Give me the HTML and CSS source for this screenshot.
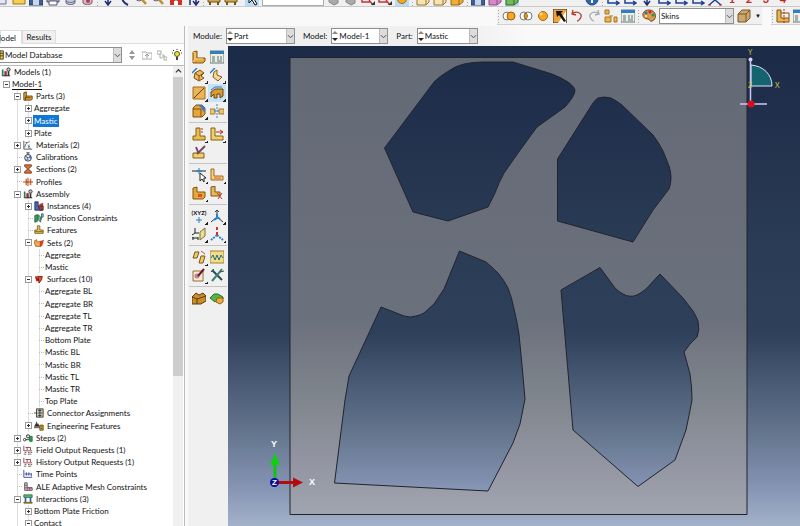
FILE: index.html
```
<!DOCTYPE html>
<html lang="en">
<head>
<meta charset="utf-8">
<meta name="viewport" content="width=device-width, initial-scale=1.0"/>
<title>Model Database</title>
<link rel="stylesheet" href="styles.css">
</head>
<body>
<svg class="defs" aria-hidden="true">
    <!-- tree icons -->
    <symbol id="t-models" viewBox="0 0 12 12"><path d="M1 3h2v7H1z" fill="#2b7a48"/><path d="M4 5h3v6H4z" fill="#a02c3c"/><path d="M1 10h10v1H1zM8 5h2v5H8z" fill="#333"/><circle cx="9" cy="3" r="2" fill="#ccc" stroke="#222"/></symbol>
    <symbol id="t-part" viewBox="0 0 12 12"><path d="M1 2l3-1v5h7v4l-2 1H1z" fill="#e2a02c" stroke="#57380a"/><path d="M4 6l-1 2v3M3 8h6" fill="none" stroke="#57380a"/></symbol>
    <symbol id="t-mat" viewBox="0 0 12 12"><path d="M1 1v10h10M2 9c1-5 3-6 6-7" fill="none" stroke="#444"/><path d="M8 6c-3 0-2 2 0 2-3 0-2 2 1 2M3 3h2" fill="none" stroke="#2d5b8f"/></symbol>
    <symbol id="t-cal" viewBox="0 0 12 12"><circle cx="6" cy="7" r="4" fill="#e8ecff" stroke="#223"/><path d="M4 1h4M6 1v2M6 7l-3-2" stroke="#223" fill="none"/><path d="M6 7l3-3 1 4z" fill="#4b62d6"/><path d="M3 9l3-2 1 3z" fill="#49a562"/></symbol>
    <symbol id="t-sec" viewBox="0 0 12 12"><path d="M2 1h8v2l-3 2v2l3 2v2H2V9l3-2V5L2 3z" fill="#d4763c" stroke="#713015"/></symbol>
    <symbol id="t-prof" viewBox="0 0 12 12"><path d="M3 2h2v8H3zM8 2h2v8H8z" fill="#d4763c"/><path d="M0 6h12M6 1v10" stroke="#8e2f12"/></symbol>
    <symbol id="t-inst" viewBox="0 0 12 12"><path d="M1 1h4v5h5v5H1z" fill="#4a69b5" stroke="#1b2c5c"/><path d="M6 4l5-2v4H8z" fill="#c73333"/><path d="M5 6h6v5H7z" fill="#89453f" stroke="#5a1f1f"/></symbol>
    <symbol id="t-pos" viewBox="0 0 12 12"><path d="M1 3l3-1v8l-3 1z" fill="#3aa060" stroke="#1f5e36"/><path d="M5 2l3 3v6L5 8z" fill="#78c08d" stroke="#1f5e36"/><path d="M9 1h2v4H9zM9 5v3" fill="#9fd0ce" stroke="#356"/></symbol>
    <symbol id="t-feat" viewBox="0 0 12 12"><path d="M4 1h3v5h4v4H1V6h3z" fill="#e9c760" stroke="#77561a"/><path d="M1 8h10" stroke="#77561a"/></symbol>
    <symbol id="t-sets" viewBox="0 0 12 12"><path d="M0 4l3-2 1 3 4-1v6H2z" fill="#f0b04d" stroke="#9a5a10"/><path d="M7 4l5-2-2 7-3 2z" fill="#df3a26"/></symbol>
    <symbol id="t-surf" viewBox="0 0 12 12"><path d="M1 3l4-1 1 6-3 1z" fill="#b01d1d"/><path d="M5 3l5 0-1 4-3 4z" fill="#d9541e" stroke="#7a1010"/><path d="M2 3l3 1" stroke="#e9a23c"/></symbol>
    <symbol id="t-conn" viewBox="0 0 12 12"><path d="M3 1h8v10H3z" fill="#c9c4b4" stroke="#333"/><path d="M0 6h4M5 3h4M5 6h5M5 9h4M7 1v10" stroke="#333" fill="none"/></symbol>
    <symbol id="t-eng" viewBox="0 0 12 12"><path d="M0 7l2-4h3l2 4z" fill="#333"/><path d="M3 1v3M0 8h7" stroke="#333"/><path d="M7 5h4v6H7z" fill="#e5c43b" stroke="#4a3a06"/><path d="M8 7h2M8 9h2" stroke="#4a3a06"/></symbol>
    <symbol id="t-step" viewBox="0 0 12 12"><circle cx="2" cy="8" r="1.5" fill="#fff" stroke="#222"/><circle cx="6" cy="4" r="2" fill="#cfe3cf" stroke="#222"/><path d="M3 8h5M7 6l2 2" stroke="#222"/><path d="M8 4h3v6H8z" fill="#3c9553" stroke="#173"/></symbol>
    <symbol id="t-out" viewBox="0 0 12 12"><path d="M1 1v6h10M3 3h6v3M5 3v3" fill="none" stroke="#8e2d3a"/><path d="M2 9h2M6 9h2M9 9h2M1 11h3M6 11h4" stroke="#554"/></symbol>
    <symbol id="t-time" viewBox="0 0 12 12"><path d="M1 1v9h10" stroke="#2b3b8e" fill="none"/><path d="M2 6h8M4 4v4M7 4v4M10 5v4" stroke="#2b3b8e"/></symbol>
    <symbol id="t-ale" viewBox="0 0 12 12"><path d="M2 1v9h9V7H5V1z" fill="#ddd" stroke="#444"/><path d="M2 4h3M2 7h9M5 7v3M8 7v3" stroke="#94364a"/></symbol>
    <symbol id="t-int" viewBox="0 0 12 12"><path d="M1 1h10v3H1z" fill="#5fbf67" stroke="#1f6a3a"/><path d="M3 4v6M9 4v6" stroke="#2d5fb5" stroke-width="2"/><path d="M1 10h10v1H1z" fill="#d9c34c" stroke="#665a10"/></symbol>
    <!-- toolbox and toolbar icons -->
    <symbol id="i-part" viewBox="0 0 14 14"><path d="M1 2l4-1v7h8v3l-2 2H1z" fill="#e5a63a" stroke="#865408"/><path d="M1 2l2 1v6l-2 3M3 9h8" fill="none" stroke="#f8d98d"/></symbol>
    <symbol id="i-table" viewBox="0 0 14 14"><path d="M0 1h14v12H0z" fill="#f3efdc" stroke="#66786e"/><path d="M0 1h14v3H0z" fill="#2e7fc4"/><path d="M2 7h3M7 7h2M10 7h2M2 9h3M7 9h2M10 9h2M2 11h3M7 11h5" stroke="#417496"/></symbol>
    <symbol id="i-ext" viewBox="0 0 14 14"><path d="M3 5l5-3 4 3-3 3 3 2-5 3-5-3z" fill="#efb95a" stroke="#7c4e10"/><path d="M3 5l4 3 5-3M7 8v4" fill="none" stroke="#7c4e10"/><path d="M0 5l5-5" stroke="#247bc1" stroke-width="1.5"/></symbol>
    <symbol id="i-shell" viewBox="0 0 14 14"><path d="M4 4l3-2v5l5 2-4 4-5-4z" fill="#f7d699" stroke="#8c5c16"/><path d="M0 5l5-5" stroke="#247bc1" stroke-width="1.5"/></symbol>
    <symbol id="i-wire" viewBox="0 0 14 14"><path d="M1 1h12v12H1z" fill="#ebb458" stroke="#a26d19"/><path d="M2 12L12 2" stroke="#59400e"/></symbol>
    <symbol id="i-cut" viewBox="0 0 14 14"><path d="M1 6l4-3h8v7l-3 2V8H7v4H4V8l-3 3z" fill="#dd9c31" stroke="#70450b"/><path d="M1 4l4-3h7" fill="none" stroke="#247bc1"/></symbol>
    <symbol id="i-round" viewBox="0 0 14 14"><path d="M1 4l3-3h6l3 3v6l-3 3H1z" fill="#e5a63a" stroke="#805110"/><path d="M1 5h8v8" fill="none" stroke="#805110"/><path d="M6 1h4l3 3v4C11 8 10 4 6 1z" fill="#4879c9"/></symbol>
    <symbol id="i-mirror" viewBox="0 0 14 14"><path d="M0 5h5v5H0zM9 5h5v5H9z" fill="#efc271" stroke="#a47a37"/><path d="M7 0v14M4 7h6" stroke="#2b86cd" stroke-dasharray="2 1"/></symbol>
    <symbol id="i-edit" viewBox="0 0 14 14"><path d="M4 1h4v8h5v4H1V9h3z" fill="#e9bc50" stroke="#86600f"/><path d="M10 1v6" stroke="#c3261b" stroke-dasharray="2 1"/></symbol>
    <symbol id="i-regen" viewBox="0 0 14 14"><path d="M1 1h4v8h8v4H1z" fill="#efcf70" stroke="#86600f"/><path d="M6 5h6M10 3l3 2-3 2" stroke="#c3261b" fill="none"/></symbol>
    <symbol id="i-del" viewBox="0 0 14 14"><path d="M1 8h11v5H1z" fill="#efcf70" stroke="#86600f"/><path d="M4 2l2 5M5 9l8-8" stroke="#774768" stroke-width="2"/></symbol>
    <symbol id="i-pick" viewBox="0 0 14 14"><path d="M0 3h14" stroke="#222"/><path d="M4 3h6M7 0v6" stroke="#217ac8"/><path d="M8 5v8l2-2 2 3v-4h2z" fill="#fff" stroke="#222"/></symbol>
    <symbol id="i-axes" viewBox="0 0 14 14"><path d="M7 8V1M7 8l-6 5M7 8l6 5M5 3l2-2 2 2" stroke="#263b4c" fill="none"/><path d="M7 5v4l-3 2M7 8l3 2" stroke="#2382cf" stroke-width="2" fill="none"/></symbol>
    <symbol id="i-plane" viewBox="0 0 14 14"><path d="M8 5l5-4v8l-5 4z" fill="#f0dc94" stroke="#777233"/><path d="M3 1v5h4M3 6L0 8M0 11h6M1 10v3M6 10v3" fill="none" stroke="#222"/></symbol>
    <symbol id="i-csys" viewBox="0 0 14 14"><path d="M7 8l-6 5M7 8l6 5" stroke="#2a82c9" stroke-width="2" stroke-dasharray="2 1"/><path d="M7 0v8" stroke="#cd3328" stroke-width="2" stroke-dasharray="3 2"/></symbol>
    <symbol id="i-xform" viewBox="0 0 14 14"><path d="M3 2h4L5 8H1zM9 6h4l-2 7H7z" fill="#efca6b" stroke="#785a15"/><path d="M9 1l4 3" stroke="#c42"/></symbol>
    <symbol id="i-wave" viewBox="0 0 14 14"><path d="M0 1h14v12H0z" fill="#f2dc84" stroke="#9b8538"/><path d="M1 8l2-3 2 5 2-5 2 5 2-5 2 3" fill="none" stroke="#1d6e91"/></symbol>
    <symbol id="i-note" viewBox="0 0 14 14"><path d="M1 3h10v10H1z" fill="#f7eccb" stroke="#8c733b"/><circle cx="5" cy="8" r="2.5" fill="#c47ba0"/><path d="M6 8l6-7" stroke="#713" stroke-width="2"/></symbol>
    <symbol id="i-tools" viewBox="0 0 14 14"><path d="M2 2l10 10" stroke="#254f48" stroke-width="2"/><path d="M12 1L8 6l-6 7" stroke="#3c8079" stroke-width="2" fill="none"/><path d="M1 4l3-3M10 4l4-1" stroke="#2c514b"/></symbol>
    <symbol id="i-box" viewBox="0 0 14 14"><path d="M0 6l4-4 3 2 4-2 3 3v5l-5 3H0z" fill="#c98c2b" stroke="#5e3c0a"/><path d="M0 6l5 2 9-3M5 8v5" stroke="#5e3c0a" fill="none"/></symbol>
    <symbol id="i-clump" viewBox="0 0 14 14"><path d="M0 7l4-4 4 0 5 3v2H8l-3 3z" fill="#55b34b" stroke="#27722a"/><path d="M7 7h6v4l-3 2-4-2z" fill="#efae38" stroke="#936113"/></symbol>
    <symbol id="i-trim" viewBox="0 0 14 14"><path d="M1 1l4-1v6h5v4H1z" fill="#edb853" stroke="#7a5414"/><path d="M7 7l5 6M12 7l-4 6" stroke="#b4382c"/></symbol>
    <symbol id="i-partred" viewBox="0 0 14 14"><path d="M1 2l4-1v5h8v5l-2 2H1z" fill="#e5a63a" stroke="#865408"/><path d="M6 8h4v3H6z" fill="#d0552b"/></symbol>
    <symbol id="i-fillet" viewBox="0 0 14 14"><path d="M1 1h3v7h9v4H1z" fill="#f4d089" stroke="#a06a1c"/><path d="M4 10h7" stroke="#d2642b"/></symbol>
    <symbol id="i-two" viewBox="0 0 14 14"><circle cx="5" cy="7" r="4" fill="#fff" stroke="#777"/><circle cx="9" cy="7" r="4" fill="#f4a726" stroke="#9a6209"/></symbol>
    <symbol id="i-lens" viewBox="0 0 14 14"><circle cx="5" cy="7" r="4" fill="#fff" stroke="#777"/><circle cx="9" cy="7" r="4" fill="#fff" stroke="#777"/><path d="M7 4a4 4 0 0 1 0 6 4 4 0 0 1 0-6z" fill="#f4a726" stroke="#9a6209"/></symbol>
    <symbol id="i-ball" viewBox="0 0 14 14"><circle cx="7" cy="7" r="4.5" fill="#f4a726" stroke="#a66c10"/><circle cx="5" cy="5" r="1.5" fill="#ffd78b"/></symbol>
    <symbol id="i-invert" viewBox="0 0 14 14"><path d="M0 0h14v14H0z" fill="#eca338" stroke="#333"/><path d="M5 14h8V2z" fill="#fff"/><path d="M3 2h7L8 4l5 8-2 1-5-7-2 2z" fill="#15110b"/></symbol>
    <symbol id="i-undo" viewBox="0 0 14 14"><path d="M3 1L2 5l4 1M2 5c4-4 10-1 9 3-1 2-2 4-4 4" fill="none" stroke="#b93a31" stroke-width="1.3"/></symbol>
    <symbol id="i-redo" viewBox="0 0 14 14"><path d="M11 1l1 4-4 1M12 5C8 1 2 4 3 8c1 2 2 4 4 4" fill="none" stroke="#aaa" stroke-width="1.3"/></symbol>
    <symbol id="i-parts" viewBox="0 0 14 14"><path d="M1 1h4v4H1zM1 8h6v5H1zM10 8h3v5h-3z" fill="#f0b24c" stroke="#a8741d"/><path d="M5 7h4" stroke="#a8741d"/></symbol>
    <symbol id="i-palette" viewBox="0 0 14 14"><path d="M7 1c8 0 8 10 3 11-3 1-2-2-4-2C-1 10-1 1 7 1z" fill="#d69a52" stroke="#75461c"/><circle cx="4" cy="4" r="1.5" fill="#2a6ac0"/><circle cx="8" cy="3" r="1.5" fill="#c22"/><circle cx="11" cy="6" r="1.5" fill="#2b9447"/><circle cx="4" cy="7" r="1.2" fill="#ee4"/></symbol>
    <symbol id="i-cube" viewBox="0 0 14 14"><path d="M1 5l4-4h8v8l-4 4H1z" fill="#cda86c" stroke="#76562b"/><path d="M1 5h8v8M9 5l4-4" fill="none" stroke="#76562b"/></symbol>
    <symbol id="i-datum" viewBox="0 0 14 14"><path d="M1 1h4v8h8v4H1z" fill="#efb44e" stroke="#7b5519"/><path d="M5 4h8v5" stroke="#7b5519" fill="none"/><path d="M8 0v14" stroke="#c4281e" stroke-dasharray="2 1"/></symbol>
    <symbol id="i-doc" viewBox="0 0 14 14"><path d="M2 1h9v11H2z" fill="#e4e6f5" stroke="#66688e"/></symbol>
    <symbol id="i-folder" viewBox="0 0 14 14"><path d="M1 4h12v8H1z" fill="#f7cf57" stroke="#9f7414"/></symbol>
    <symbol id="i-save" viewBox="0 0 14 14"><path d="M0 1h14v12H0z" fill="#3e5f95" stroke="#253c66"/><path d="M4 8h6v5H4z" fill="#c9d6e8"/></symbol>
    <symbol id="i-print" viewBox="0 0 14 14"><path d="M1 5h12v5H1z" fill="#aaa6c4" stroke="#55557f"/><path d="M3 9h8v4H3z" fill="#fff" stroke="#55557f"/></symbol>
    <symbol id="i-db" viewBox="0 0 14 14"><path d="M3 2h9v9c-2 2-7 2-9 0z" fill="#c4cada" stroke="#5d6889"/><path d="M3 9c3 2 6 2 9 0" stroke="#5d6889" fill="none"/></symbol>
    <symbol id="i-db2" viewBox="0 0 14 14"><path d="M3 2h9v9c-2 2-7 2-9 0z" fill="#d5bcc8" stroke="#84506b"/><circle cx="8" cy="9" r="2" fill="#ae3d60"/></symbol>
    <symbol id="i-down" viewBox="0 0 14 14"><path d="M7 1v11M4 9l3 4 3-4" fill="none" stroke="#1c2b78" stroke-width="1.5"/></symbol>
    <symbol id="i-curve" viewBox="0 0 14 14"><path d="M4 3c0 6 2 8 6 10" fill="none" stroke="#252c7e" stroke-width="2"/></symbol>
    <symbol id="i-mag" viewBox="0 0 14 14"><path d="M3 3l8 9" stroke="#bb9131" stroke-width="2.5"/><circle cx="4" cy="6" r="3" fill="#dde" stroke="#666"/></symbol>
    <symbol id="i-fit" viewBox="0 0 14 14"><path d="M1 2h12v11H1z" fill="#cf3326"/><path d="M5 9h4v4H5z" fill="#fff"/><path d="M7 2v8" stroke="#fff"/></symbol>
    <symbol id="i-updown" viewBox="0 0 14 14"><path d="M4 2v11M10 2v10M7 9l3 4 3-4" fill="none" stroke="#1c2b78" stroke-width="1.5"/></symbol>
    <symbol id="i-bench" viewBox="0 0 14 14"><path d="M1 7h12v3H1z" fill="#c9a85b" stroke="#735415"/><path d="M3 10v3M11 10v3" stroke="#735415" stroke-width="2"/></symbol>
    <symbol id="i-arrow" viewBox="0 0 14 14"><path d="M4 1v10l3-3 3 5 2-1-3-5h3z" fill="#fff" stroke="#111"/></symbol>
    <symbol id="i-gray" viewBox="0 0 14 14"><path d="M2 3h9v8l-4 2-5-3z" fill="#aaa" stroke="#888"/></symbol>
    <symbol id="i-redpick" viewBox="0 0 14 14"><path d="M1 2v8h9M8 8l4 5" stroke="#c03632" stroke-width="1.5" fill="none"/><path d="M10 13h4v-4z" fill="#333"/></symbol>
    <symbol id="i-frame" viewBox="0 0 14 14"><path d="M1 5h9v8H1zM10 5l3-3v8l-3 3" fill="#f6e5b4" stroke="#9b7426"/></symbol>
    <symbol id="i-solid" viewBox="0 0 14 14"><path d="M1 5h8v8H1zM9 5l4-3v8l-4 3" fill="#f0af34" stroke="#9b6410"/></symbol>
    <symbol id="i-green" viewBox="0 0 14 14"><path d="M1 5h8v8H1zM9 5l4-3v8l-4 3" fill="#76b95a" stroke="#2d6a2a"/></symbol>
    <symbol id="i-pink" viewBox="0 0 14 14"><path d="M1 5h8v8H1zM9 5l4-3v8l-4 3" fill="#d986c5" stroke="#864e91"/></symbol>
    <symbol id="i-info" viewBox="0 0 14 14"><circle cx="7" cy="7" r="6" fill="#2d67b3" stroke="#1b427b"/><path d="M7 6v5" stroke="#fff" stroke-width="2"/></symbol>
    <symbol id="i-view" viewBox="0 0 14 14"><path d="M2 3v8h11M10 9l3 2-3 2" fill="none" stroke="#1b409c" stroke-width="1.5"/></symbol>
    <symbol id="i-iso" viewBox="0 0 14 14"><path d="M7 2v6l-6 5M7 8l6 5" fill="none" stroke="#1b409c" stroke-width="1.5"/><path d="M0 13h3M11 13h3" stroke="#c22"/></symbol>
    <!-- small widgets -->
    <symbol id="w-chev" viewBox="0 0 8 8"><path d="M1 3l3 3 3-3" fill="none" stroke="#444"/></symbol>
    <symbol id="w-spin" viewBox="0 0 6 14"><path d="M0 5l3-3 3 3z" fill="#888"/><path d="M0 9l3 3 3-3z" fill="#222"/></symbol>
</svg>

<header class="toolbars">
    <div class="bar bar-top">
        <button class="ib"><svg><use href="#i-doc"/></svg></button>
        <button class="ib"><svg><use href="#i-folder"/></svg></button>
        <button class="ib"><svg><use href="#i-save"/></svg></button>
        <button class="ib"><svg><use href="#i-print"/></svg></button>
        <button class="ib"><svg><use href="#i-db"/></svg></button>
        <button class="ib"><svg><use href="#i-db2"/></svg></button>
        <button class="ib grip-before"><svg><use href="#i-down"/></svg></button>
        <button class="ib"><svg><use href="#i-curve"/></svg></button>
        <button class="ib"><svg><use href="#i-mag"/></svg></button>
        <button class="ib"><svg><use href="#i-mag"/></svg></button>
        <button class="ib"><svg><use href="#i-fit"/></svg></button>
        <button class="ib"><svg><use href="#i-updown"/></svg></button>
        <button class="ib grip-before"><svg><use href="#i-bench"/></svg></button>
        <button class="ib"><svg><use href="#i-bench"/></svg></button>
        <button class="ib grip-before on"><svg><use href="#i-arrow"/></svg></button>
        <select class="filter" aria-label="Selection filter"><option></option></select>
        <button class="ib"><svg><use href="#i-gray"/></svg></button>
        <button class="ib"><svg><use href="#i-gray"/></svg></button>
        <button class="ib"><svg><use href="#i-redpick"/></svg></button>
        <button class="ib"><svg><use href="#i-redpick"/></svg></button>
        <button class="ib on"><svg><use href="#i-ball"/></svg></button>
        <button class="ib grip-before"><svg><use href="#i-frame"/></svg></button>
        <button class="ib"><svg><use href="#i-frame"/></svg></button>
        <button class="ib"><svg><use href="#i-solid"/></svg></button>
        <button class="ib grip-before"><svg><use href="#i-save"/></svg></button>
        <button class="ib"><svg><use href="#i-pink"/></svg></button>
        <button class="ib on"><svg><use href="#i-green"/></svg></button>
        <span class="views">
            <button class="ib"><svg><use href="#i-info"/></svg></button>
            <button class="ib grip-before"><svg><use href="#i-view"/></svg></button>
            <button class="ib"><svg><use href="#i-view"/></svg></button>
            <button class="ib"><svg><use href="#i-down"/></svg></button>
            <button class="ib"><svg><use href="#i-view"/></svg></button>
            <button class="ib"><svg><use href="#i-view"/></svg></button>
            <button class="ib"><svg><use href="#i-view"/></svg></button>
            <button class="ib"><svg><use href="#i-iso"/></svg></button>
            <button class="ib num">1</button>
            <button class="ib num">2</button>
            <button class="ib num">3</button>
            <button class="ib num">4</button>
        </span>
    </div>
    <div class="bar-row">
        <div class="bar bar-display">
            <button class="ib grip-before"><svg><use href="#i-two"/></svg></button>
            <button class="ib"><svg><use href="#i-lens"/></svg></button>
            <button class="ib"><svg><use href="#i-ball"/></svg></button>
            <button class="ib"><svg><use href="#i-invert"/></svg></button>
            <button class="ib"><svg><use href="#i-undo"/></svg></button>
            <button class="ib"><svg><use href="#i-redo"/></svg></button>
            <button class="ib"><svg><use href="#i-parts"/></svg></button>
            <button class="ib"><svg><use href="#i-table"/></svg></button>
            <button class="ib grip-before"><svg><use href="#i-palette"/></svg></button>
            <span class="combo combo-skins">
                <select aria-label="Color code"><option>Skins</option></select>
                <span class="chev"><svg><use href="#w-chev"/></svg></span>
            </span>
            <button class="ib"><svg><use href="#i-cube"/></svg></button>
            <button class="ib drop" aria-label="Translucency">▼</button>
        </div>
        <div class="bar bar-tools">
            <button class="ib grip-before"><svg><use href="#i-datum"/></svg></button>
            <button class="ib"><svg><use href="#i-table"/></svg></button>
        </div>
    </div>
</header>

<div class="main">
    <aside class="side">
        <nav class="tabs">
            <button class="tab active">Model</button>
            <button class="tab">Results</button>
        </nav>
        <div class="db-row">
            <span class="combo combo-db">
                <svg class="db-icon" viewBox="0 0 6 12"><path d="M0 1h4v10H0z" fill="#e7c642" stroke="#333"/><path d="M0 4h4M0 7h4" stroke="#333"/></svg>
                <select aria-label="Database"><option>Model Database</option></select>
                <span class="chev"><svg><use href="#w-chev"/></svg></span>
            </span>
            <button class="mini" aria-label="Step"><svg viewBox="0 0 10 12"><path d="M2 5l3-4 3 4zM2 7l3 4 3-4z" fill="#999"/></svg></button>
            <button class="mini" aria-label="Up"><svg viewBox="0 0 10 12"><path d="M0 3h4l1 1h5v6H0z" fill="#fff" stroke="#aaa"/><path d="M5 9V6M3 7l2-2 2 2" stroke="#999" fill="none"/></svg></button>
            <button class="mini" aria-label="Filter"><svg viewBox="0 0 10 12"><path d="M0 2h4v3H0zM3 5v4h2M5 6h2v2H5M7 8h3v3H7z" fill="none" stroke="#aaa"/></svg></button>
            <button class="mini" aria-label="Tips"><svg viewBox="0 0 10 12"><path d="M5 0v1M0 4h1M9 4h1M1 1l1 1M9 1L8 2" stroke="#333"/><circle cx="5" cy="5" r="2.5" fill="#f4e13c" stroke="#555520"/><path d="M4 8h2v3H4z" fill="#444"/></svg></button>
        </div>
        <div class="tree-box">
            <ul class="tree">
                <li class="l0"><svg><use href="#t-models"/></svg><span>Models (1)</span></li>
                <li class="l1"><button class="tg minus" aria-label="Collapse"></button><span class="root">Model-1</span></li>
                <li class="l2"><button class="tg minus" aria-label="Collapse"></button><svg><use href="#t-part"/></svg><span>Parts (3)</span></li>
                <li class="l3"><button class="tg" aria-label="Expand"></button><span>Aggregate</span></li>
                <li class="l3"><button class="tg" aria-label="Expand"></button><span class="sel">Mastic</span></li>
                <li class="l3"><button class="tg" aria-label="Expand"></button><span>Plate</span></li>
                <li class="l2"><button class="tg" aria-label="Expand"></button><svg><use href="#t-mat"/></svg><span>Materials (2)</span></li>
                <li class="l2"><i></i><svg><use href="#t-cal"/></svg><span>Calibrations</span></li>
                <li class="l2"><button class="tg" aria-label="Expand"></button><svg><use href="#t-sec"/></svg><span>Sections (2)</span></li>
                <li class="l2"><i></i><svg><use href="#t-prof"/></svg><span>Profiles</span></li>
                <li class="l2"><button class="tg minus" aria-label="Collapse"></button><svg><use href="#t-models"/></svg><span>Assembly</span></li>
                <li class="l3"><button class="tg" aria-label="Expand"></button><svg><use href="#t-inst"/></svg><span>Instances (4)</span></li>
                <li class="l3"><i></i><svg><use href="#t-pos"/></svg><span>Position Constraints</span></li>
                <li class="l3"><i></i><svg><use href="#t-feat"/></svg><span>Features</span></li>
                <li class="l3"><button class="tg minus" aria-label="Collapse"></button><svg><use href="#t-sets"/></svg><span>Sets (2)</span></li>
                <li class="l4"><i></i><span>Aggregate</span></li>
                <li class="l4"><i></i><span>Mastic</span></li>
                <li class="l3"><button class="tg minus" aria-label="Collapse"></button><svg><use href="#t-surf"/></svg><span>Surfaces (10)</span></li>
                <li class="l4"><i></i><span>Aggregate BL</span></li>
                <li class="l4"><i></i><span>Aggregate BR</span></li>
                <li class="l4"><i></i><span>Aggregate TL</span></li>
                <li class="l4"><i></i><span>Aggregate TR</span></li>
                <li class="l4"><i></i><span>Bottom Plate</span></li>
                <li class="l4"><i></i><span>Mastic BL</span></li>
                <li class="l4"><i></i><span>Mastic BR</span></li>
                <li class="l4"><i></i><span>Mastic TL</span></li>
                <li class="l4"><i></i><span>Mastic TR</span></li>
                <li class="l4"><i></i><span>Top Plate</span></li>
                <li class="l3"><i></i><svg><use href="#t-conn"/></svg><span>Connector Assignments</span></li>
                <li class="l3"><button class="tg" aria-label="Expand"></button><svg><use href="#t-eng"/></svg><span>Engineering Features</span></li>
                <li class="l2"><button class="tg" aria-label="Expand"></button><svg><use href="#t-step"/></svg><span>Steps (2)</span></li>
                <li class="l2"><button class="tg" aria-label="Expand"></button><svg><use href="#t-out"/></svg><span>Field Output Requests (1)</span></li>
                <li class="l2"><button class="tg" aria-label="Expand"></button><svg><use href="#t-out"/></svg><span>History Output Requests (1)</span></li>
                <li class="l2"><i></i><svg><use href="#t-time"/></svg><span>Time Points</span></li>
                <li class="l2"><i></i><svg><use href="#t-ale"/></svg><span>ALE Adaptive Mesh Constraints</span></li>
                <li class="l2"><button class="tg minus" aria-label="Collapse"></button><svg><use href="#t-int"/></svg><span>Interactions (3)</span></li>
                <li class="l3"><button class="tg" aria-label="Expand"></button><span>Bottom Plate Friction</span></li>
                <li class="l3"><button class="tg minus" aria-label="Collapse"></button><span>Contact</span></li>
            </ul>
            <div class="scroll">
                <button class="scroll-up" aria-label="Scroll up"><svg viewBox="0 0 8 8"><path d="M1 5l3-3 3 3" fill="none" stroke="#444" stroke-width="1.5"/></svg></button>
                <div class="thumb"></div>
            </div>
        </div>
    </aside>

    <section class="work">
        <div class="context">
            <label for="module">Module:</label>
            <span class="combo combo-module">
                <svg class="spin"><use href="#w-spin"/></svg>
                <select id="module"><option>Part</option></select>
                <span class="chev"><svg><use href="#w-chev"/></svg></span>
            </span>
            <label for="model">Model:</label>
            <span class="combo combo-model">
                <svg class="spin"><use href="#w-spin"/></svg>
                <select id="model"><option>Model-1</option></select>
                <span class="chev"><svg><use href="#w-chev"/></svg></span>
            </span>
            <label for="part">Part:</label>
            <span class="combo combo-part">
                <svg class="spin"><use href="#w-spin"/></svg>
                <select id="part"><option>Mastic</option></select>
                <span class="chev"><svg><use href="#w-chev"/></svg></span>
            </span>
        </div>
        <div class="stage">
            <div class="toolbox">
                <div class="group">
                    <button class="tb"><svg><use href="#i-part"/></svg></button>
                    <button class="tb"><svg><use href="#i-table"/></svg></button>
                    <button class="tb more"><svg><use href="#i-ext"/></svg></button>
                    <button class="tb more"><svg><use href="#i-shell"/></svg></button>
                    <button class="tb more"><svg><use href="#i-wire"/></svg></button>
                    <button class="tb more on"><svg><use href="#i-cut"/></svg></button>
                    <button class="tb more"><svg><use href="#i-round"/></svg></button>
                    <button class="tb"><svg><use href="#i-mirror"/></svg></button>
                </div>
                <div class="group">
                    <button class="tb more"><svg><use href="#i-edit"/></svg></button>
                    <button class="tb more"><svg><use href="#i-regen"/></svg></button>
                    <button class="tb"><svg><use href="#i-del"/></svg></button>
                </div>
                <div class="group">
                    <button class="tb more"><svg><use href="#i-pick"/></svg></button>
                    <button class="tb more"><svg><use href="#i-fillet"/></svg></button>
                    <button class="tb more"><svg><use href="#i-partred"/></svg></button>
                    <button class="tb"><svg><use href="#i-trim"/></svg></button>
                </div>
                <div class="group">
                    <button class="tb more xyz">(XYZ)<svg viewBox="0 0 6 6"><path d="M0 3h6M3 0v6" stroke="#247fcc"/></svg></button>
                    <button class="tb more"><svg><use href="#i-axes"/></svg></button>
                    <button class="tb more"><svg><use href="#i-plane"/></svg></button>
                    <button class="tb more"><svg><use href="#i-csys"/></svg></button>
                </div>
                <div class="group">
                    <button class="tb more"><svg><use href="#i-xform"/></svg></button>
                    <button class="tb"><svg><use href="#i-wave"/></svg></button>
                    <button class="tb more"><svg><use href="#i-note"/></svg></button>
                    <button class="tb"><svg><use href="#i-tools"/></svg></button>
                </div>
                <div class="group">
                    <button class="tb"><svg><use href="#i-box"/></svg></button>
                    <button class="tb"><svg><use href="#i-clump"/></svg></button>
                </div>
            </div>
            <div class="viewport">
                <svg class="scene" viewBox="228 46 572 480">
                    <defs>
                        <linearGradient id="plate" x1="0" y1="57" x2="0" y2="515" gradientUnits="userSpaceOnUse">
                            <stop offset="0" stop-color="#646a75"/>
                            <stop offset=".57" stop-color="#6b707d"/>
                            <stop offset=".75" stop-color="#80868d"/>
                            <stop offset=".88" stop-color="#9295a1"/>
                            <stop offset="1" stop-color="#a1a5af"/>
                        </linearGradient>
                    </defs>
                    <!-- plate with the four aggregate cut-outs -->
                    <path class="plate" fill="url(#plate)" fill-rule="evenodd" d="M290 57.500H747V514.500H290z
                        M384.500 148L434 82Q440 76 447 72Q455 66 464 64Q473 62 483 62H513L552 74Q560 77 568 82Q575 87 575 91Q574 97 565 107L537 127L518 153L504 173Q499 182 495 193L488 207L448 221L413 212z
                        M557.500 159L593 103Q595 100 598 98Q604 96 611 98Q617 101 622 105L653 135Q659 143 663 151L669 166Q671 172 671 178Q671 184 669 189L653 210L633 242L557.500 221z
                        M459.500 251L486 262Q492 267 498 273Q504 280 508 288Q512 298 514 309Q517 321 519 334L522 365L525 399L520 424L513 443L488 491L334.500 483L345 400L349 376L381 307L404 316Q411 318 416 316Q421 315 424 313L434 304L444 289z
                        M561 290L600 267.500L615 288Q619 292 623 294Q630 298 637 295Q641 293 646 289L660 274L683 298L693 311Q696 316 698 321Q700 330 697 337L690 344L684 352L690 374Q692 387 692 400Q689 416 686 430L675 460L638 486.500L573 430z"/>
                    <!-- view compass -->
                    <g class="compass">
                        <path d="M751 65c12 1 21 9 21 21h-21z" fill="#14636f" stroke="#dfe3ff"/>
                        <path d="M750.500 60v43M740 104h27" stroke="#cfc6f5" stroke-width="1.500"/>
                        <circle cx="750.500" cy="59.500" r="2" fill="#d9d0ff"/>
                        <circle cx="751" cy="104" r="3.500" fill="#d80d1c"/>
                        <text x="748" y="55">Y</text>
                        <text x="748" y="88">Z</text>
                        <text x="775" y="88">X</text>
                    </g>
                    <!-- axis triad -->
                    <g class="triad">
                        <path d="M275 480V465" stroke="#0fc50f" stroke-width="3"/>
                        <path d="M270 465l5-12 5 12z" fill="#10cf14"/>
                        <path d="M278 482.500h15" stroke="#b50d0d" stroke-width="3"/>
                        <path d="M293 477.500l10 5-10 5z" fill="#b20c0c"/>
                        <circle cx="274.500" cy="482.500" r="4.500" fill="#0a0aa0"/>
                        <text x="271" y="447">Y</text>
                        <text x="309" y="485">X</text>
                        <text class="z" x="272" y="485">Z</text>
                    </g>
                </svg>
            </div>
        </div>
    </section>
</div>
</body>
</html>
```
FILE: styles.css
```
* {
    box-sizing: border-box;
}

body {
    margin: 0;
    height: 100vh;
    overflow: hidden;
    display: flex;
    flex-direction: column;
    background: #f9f9f9;
    color: #111;
    font-family: Lato, "Open Sans", sans-serif;
    font-size: 8px;
}

button,
select {
    font: inherit;
    color: inherit;
    margin: 0;
    padding: 0;
    border: none;
    background: none;
    appearance: none;
}

.defs {
    position: absolute;
    width: 0;
    height: 0;
}

/* toolbars */
.bar {
    display: flex;
    align-items: center;
    gap: 3px;
    background: #f0f0f0;
}

.ib {
    flex: none;
    display: flex;
    width: 14px;
    height: 14px;
}

.ib svg {
    width: 14px;
    height: 14px;
}

.ib.on {
    background: #b9dcf5;
}

.grip-before {
    width: 18px;
    padding-left: 4px;
    background: linear-gradient(#aaa 1px, transparent 1px) 0 1px / 1px 3px repeat-y;
}

.grip-before.on {
    background: linear-gradient(#b9dcf5, #b9dcf5) 4px 0 no-repeat;
}

.bar-top {
    height: 7px;
    align-items: flex-end;
    overflow: hidden;
    border-bottom: 1px solid #c9c9c9;
    margin-left: -5px;
    padding-right: 10px;
}

.filter {
    flex: none;
    width: 62px;
    height: 14px;
    background: #fff;
    border: 1px solid #aaa;
}

.views {
    display: flex;
    gap: 3px;
    margin-left: auto;
}

.num {
    justify-content: center;
    color: #c5221c;
    font-size: 11px;
    font-weight: bold;
    line-height: 14px;
}

.bar-row {
    display: flex;
    justify-content: flex-end;
    gap: 9px;
    height: 19px;
}

.bar-display,
.bar-tools {
    height: 18px;
    padding-left: 1px;
    overflow: hidden;
    border-bottom: 1px solid #d0d0d0;
}

.bar-tools {
    width: 29px;
}

.drop {
    width: 8px;
    align-items: center;
    justify-content: center;
    font-size: 6px;
}

/* combo boxes */
.combo {
    flex: none;
    display: flex;
    align-items: center;
    height: 16px;
    background: #fff;
    border: 1px solid #8f8f8f;
}

.combo select {
    flex: 1;
    min-width: 0;
    height: 14px;
    padding-left: 1px;
}

.chev {
    display: flex;
    align-items: center;
    height: 100%;
    background: #dcdcdc;
    border-left: 1px solid #bbb;
}

.chev svg {
    width: 7px;
    height: 8px;
}

.spin {
    width: 6px;
    height: 14px;
}

.combo-skins { width: 75px; }
.combo-module { width: 69px; }
.combo-model { width: 57px; }
.combo-part { width: 61px; }

/* model tree */
.main {
    flex: 1;
    display: flex;
    min-height: 0;
}

.side {
    flex: none;
    width: 185px;
    padding-top: 4px;
    display: flex;
    flex-direction: column;
    border-right: 1px solid #bbb;
}

.tabs {
    display: flex;
    height: 14px;
    border-bottom: 1px solid #ddd;
}

.tab {
    width: 34px;
    height: 14px;
    background: #f0f0f0;
    border: 1px solid #ddd;
}

.tab.active {
    width: 22px;
    display: flex;
    justify-content: flex-end;
    align-items: center;
    padding-right: 5px;
    background: #fff;
    border-bottom: none;
}

.db-row {
    display: flex;
    align-items: center;
    gap: 5px;
    height: 22px;
    background: #fff;
    border-bottom: 1px solid #bbb;
}

.combo-db {
    width: 122px;
    border-left: none;
}

.db-icon {
    width: 5px;
    height: 12px;
}

.combo-db select {
    padding-left: 0;
}

.mini {
    display: flex;
    width: 10px;
    height: 12px;
}

.mini svg {
    width: 10px;
    height: 12px;
}

.tree-box {
    flex: 1;
    display: flex;
    min-height: 0;
    background: #fff;
    overflow: hidden;
}

.tree {
    flex: 1;
    margin: 0;
    padding: 0;
    list-style: none;
    white-space: nowrap;
}

.tree li {
    display: flex;
    align-items: center;
    height: 12px;
}

.tree li:nth-child(5n) {
    height: 13px;
}

.tree svg {
    width: 10px;
    height: 10px;
    margin-right: 3px;
}

.tree li span {
    line-height: 12px;
}

.tg {
    width: 7px;
    height: 7px;
    margin-right: 2px;
    border: 1px solid #9a9a9a;
    background: linear-gradient(#334, #334) center / 3px 1px no-repeat, linear-gradient(#334, #334) center / 1px 3px no-repeat, #fff;
}

.tg.minus {
    background: linear-gradient(#334, #334) center / 3px 1px no-repeat, #fff;
}

.tree i {
    width: 5px;
    margin-left: 3px;
    margin-right: 1px;
    border-top: 1px dotted #bbb;
}

.l0 { padding-left: 1px; }
.l1 { padding-left: 3px; }
.l2 { padding-left: 14px; background: linear-gradient(#ddd, #ddd) 17px 0 / 1px 100% no-repeat; }
.l3 { padding-left: 25px; background: linear-gradient(#ddd, #ddd) 17px 0 / 1px 100% no-repeat, linear-gradient(#ddd, #ddd) 28px 0 / 1px 100% no-repeat; }
.l4 { padding-left: 36px; background: linear-gradient(#ddd, #ddd) 17px 0 / 1px 100% no-repeat, linear-gradient(#ddd, #ddd) 28px 0 / 1px 100% no-repeat, linear-gradient(#ddd, #ddd) 39px 0 / 1px 100% no-repeat; }

.tree .root {
    border-bottom: 1px solid #111;
    line-height: 10px;
}

.tree .sel {
    background: #0f78d4;
    color: #fff;
    padding: 0 1px;
    margin-left: -1px;
}

.scroll {
    width: 10px;
    margin-right: 1px;
    display: flex;
    flex-direction: column;
    background: #f0f0f0;
}

.scroll-up {
    height: 11px;
    display: flex;
    align-items: center;
    justify-content: center;
}

.scroll-up svg {
    width: 7px;
    height: 7px;
}

.thumb {
    height: 65%;
    background: #cdcdcd;
}

/* work area */
.work {
    flex: 1;
    display: flex;
    flex-direction: column;
    min-width: 0;
    margin-left: 3px;
}

.context {
    display: flex;
    align-items: center;
    gap: 4px;
    height: 20px;
    padding-left: 5px;
    background: linear-gradient(90deg, #f0f0f0, #f0f0f0 280px, #f9f9f9 340px);
}

.combo + label {
    margin-left: 4px;
}

.stage {
    flex: 1;
    display: flex;
    min-height: 0;
}

.toolbox {
    flex: none;
    width: 40px;
    padding: 0 1px;
    background: #f0f0f0;
}

.group {
    display: grid;
    grid-template-columns: 18px 18px;
    grid-auto-rows: 18px;
    padding: 2px 1px;
    border-bottom: 1px solid #c4c4c4;
}

.group:last-child {
    border-bottom: none;
}

.tb {
    display: flex;
    align-items: center;
    justify-content: center;
}

.tb svg {
    width: 14px;
    height: 14px;
}

.tb.on {
    background-color: #c5e2f6;
}

.tb.more {
    background-image: linear-gradient(135deg, transparent 50%, #222 50%);
    background-size: 3px 3px;
    background-position: right bottom;
    background-repeat: no-repeat;
}

.xyz {
    flex-direction: column;
    font-size: 6px;
    font-weight: bold;
    line-height: 8px;
}

.xyz svg {
    width: 6px;
    height: 6px;
}

.viewport {
    flex: 1;
    min-width: 0;
    background: linear-gradient(#1b2a47, #2a3b55 40%, #2f405b 60%, #53647e 74%, #62748b 80%, #8291b0 91%, #a3b1c9);
}

.scene {
    display: block;
    width: 100%;
    height: 100%;
}

.plate {
    stroke: #20242c;
    stroke-width: 1;
}

.compass text {
    fill: #c9c531;
    font-size: 7px;
}

.triad text {
    fill: #fff;
    font-family: "Liberation Sans", sans-serif;
    font-size: 9px;
    font-weight: bold;
}

.triad .z {
    font-size: 8px;
}
```
